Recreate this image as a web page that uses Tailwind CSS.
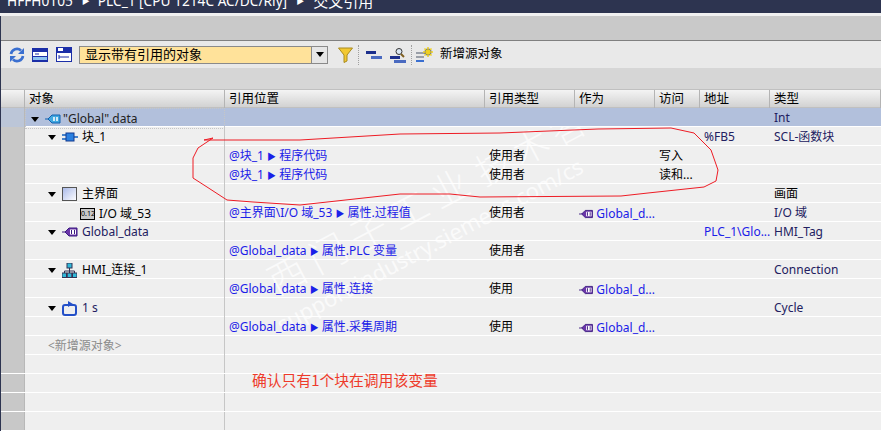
<!DOCTYPE html>
<html lang="zh">
<head>
    <meta charset="UTF-8" />
    <meta name="viewport" content="width=device-width, initial-scale=1" />
    <title>交叉引用</title>
    <script src="https://cdn.jsdelivr.net/npm/@tailwindcss/browser@4"></script>
</head>
<body class="relative w-[881px] h-[431px] overflow-hidden bg-[#efefef] text-[12px] text-black font-['Noto_Sans','Noto_Sans_CJK_SC',sans-serif]">
    <svg class="hidden">
        <symbol id="tag" viewBox="0 0 16 12">
            <path d="M0 6h4" stroke="#3a1a80" fill="none"/>
            <path d="M3 6l4-4h8v8H7z" fill="#6a35a8" stroke="#3a1a80"/>
            <rect x="8" y="3.500" width="6" height="5" fill="#fff"/>
            <path d="M9.500 4v4M12.500 4v4" stroke="#3a1a80"/>
        </symbol>
        <symbol id="down" viewBox="0 0 8 5"><path d="M0 0h8L4 5z" fill="#000"/></symbol>
    </svg>

    <!-- watermark, sits under the table rows -->
    <div class="absolute left-[278px] top-[310px] -rotate-[28deg] origin-left text-[22px] leading-[30px] text-white/70 whitespace-nowrap">support.industry.siemens.com/cs</div>
    <div class="absolute left-[270px] top-[258px] -rotate-[28deg] origin-left text-[38px] leading-[50px] font-light tracking-[8px] text-white/70 whitespace-nowrap">西门子工业</div>
    <div class="absolute left-[478px] top-[150px] -rotate-[28deg] origin-left text-[36px] leading-[50px] font-light tracking-[6px] text-white/70 whitespace-nowrap">技术答家</div>

    <!-- title bar -->
    <div class="relative h-[13px] bg-[#2d3450] overflow-hidden pl-[7px] text-white text-[13.700px] whitespace-nowrap">
        <div class="flex items-center h-[18px] -mt-[8px]">
            <span>HFFH0105</span><span class="text-[8px] ml-[9px]">▶</span><span class="ml-[8px]">PLC_1 [CPU 1214C AC/DC/Rly]</span><span class="text-[8px] ml-[9px]">▶</span><span class="ml-[9px] text-[15px]">交叉引用</span>
        </div>
    </div>
    <div class="relative h-[3px] bg-[#f0f0f0]"></div>
    <div class="relative h-[25px] bg-[#c9c9c9] border-b border-[#808080]"></div>

    <!-- toolbar -->
    <div class="relative h-[27px] bg-[#e9e9e9] flex items-center pl-[9px]">
        <svg class="w-[16px] h-[16px]" viewBox="0 0 16 16" fill="none" stroke="#3a6fd0" stroke-width="2.600">
            <path d="M2 7a6 6 0 0 1 10-3.500"/><path d="M14 9a6 6 0 0 1-10 3.500"/>
            <path d="M15 1v6H9z" fill="#3a6fd0" stroke="none"/><path d="M1 15V9h6z" fill="#3a6fd0" stroke="none"/>
        </svg>
        <svg class="w-[16px] h-[14px] ml-[7px]" viewBox="0 0 16 14"><rect width="16" height="14" fill="#1c2fa8"/><rect x="1" y="4" width="14" height="4" fill="#fff"/><path d="M3 6h4" stroke="#1c2fa8"/><rect x="1" y="9" width="14" height="3" fill="#8ec3f0"/></svg>
        <svg class="w-[16px] h-[15px] ml-[8px]" viewBox="0 0 16 15"><rect width="16" height="15" fill="#1c2fa8"/><rect x="1" y="6" width="14" height="8" fill="#fff"/><rect x="2" y="1" width="5" height="3" fill="#fff"/><path d="M3 8v4M3 10h10" stroke="#1c2fa8"/></svg>
        <div class="ml-[7px] w-[249px] h-[18px] flex border border-[#8a8a8a] bg-[#ffe29a]">
            <span class="flex-1 pl-[5px] leading-[15px] text-[13px]">显示带有引用的对象</span>
            <span class="w-[16px] bg-[#e6e6e6] border-l border-[#8a8a8a] flex items-center justify-center">
                <svg class="w-[8px] h-[5px]"><use href="#down"/></svg>
            </span>
        </div>
        <svg class="w-[15px] h-[16px] ml-[10px]" viewBox="0 0 15 16"><path d="M.5 1h14L9 8v6l-3 1.500V8z" fill="#f2c832" stroke="#a88a20"/></svg>
        <div class="ml-[5px] h-[20px] border-l border-dotted border-[#a0a0a0]"></div>
        <svg class="w-[16px] h-[10px] ml-[7px]" viewBox="0 0 16 10"><rect width="10" height="3" y="1" fill="#1c2f8c"/><rect x="5" y="6" width="11" height="3" fill="#4a6ac0"/></svg>
        <svg class="w-[16px] h-[16px] ml-[8px]" viewBox="0 0 16 16"><circle cx="9" cy="4.500" r="3" fill="#dce8f4" stroke="#333"/><path d="M11 7l3 3" stroke="#806020" stroke-width="2"/><rect y="9" width="10" height="3" fill="#1c2f8c"/><rect x="4" y="13" width="12" height="3" fill="#4a6ac0"/></svg>
        <div class="ml-[5px] h-[20px] border-l border-dotted border-[#a0a0a0]"></div>
        <svg class="w-[17px] h-[16px] ml-[4px]" viewBox="0 0 17 16"><path d="M0 6h9M0 10h8" stroke="#9a9fa8" stroke-width="2"/><path d="M0 14h8" stroke="#3a6fd0" stroke-width="2"/><circle cx="12" cy="5" r="3.500" fill="#2a4a90"/><path d="M12 0v10M7 5h10M8.500 1.500l7 7M15.500 1.500l-7 7" stroke="#f0d020" stroke-width="1.500"/></svg>
        <span class="ml-[7px] text-[12.500px]">新增源对象</span>
    </div>
    <div class="relative h-[21px] bg-[#d6d6d6]"></div>

    <!-- header -->
    <div class="relative h-[19px] grid grid-cols-[25px_200px_260px_90px_80px_45px_70px_111px] bg-linear-to-b from-[#f4f4f4] to-[#d2d2d2] border-y border-[#c0c0c0] text-[12.500px] leading-[18px] [&>*]:border-r [&>*]:border-[#b4b4b4] [&>*]:pl-[4px]">
        <div></div><div>对象</div><div>引用位置</div><div>引用类型</div><div>作为</div><div>访问</div><div>地址</div><div>类型</div>
    </div>

    <!-- rows -->
    <div class="relative leading-[18px] [&>div]:h-[19px] [&>div]:grid [&>div]:grid-cols-[25px_200px_260px_90px_80px_45px_70px_111px] [&>div]:border-b [&>div]:border-white [&>div>*:nth-child(1)]:bg-[#c8c8c8] [&>div>*:nth-child(1)]:border-r [&>div>*:nth-child(1)]:border-[#b8b8b8] [&>div>*:nth-child(2)]:border-r [&>div>*:nth-child(2)]:border-[#c6c6c6] [&>div>*:nth-child(n+3)]:pl-[4px] [&>div>*]:pt-[1px] [&>div>*]:whitespace-nowrap">
        <div class="bg-[#b2c0dc]">
            <i class="bg-[#bcc6d8]!"></i>
            <span class="flex items-center pl-[5px] border border-dotted border-[#2a50b0]">
                <svg class="w-[8px] h-[5px]"><use href="#down"/></svg>
                <svg class="w-[16px] h-[12px] ml-[6px]" viewBox="0 0 16 12"><path d="M0 6h4" stroke="#1060b0"/><path d="M3 6l4-4h8v8H7z" fill="#40a8e0" stroke="#1060b0"/><path d="M9 4v4M12 4v4" stroke="#fff" stroke-width="1.500"/></svg>
                <span class="ml-[2px] text-[#222]">"Global".data</span>
            </span>
            <i></i><i></i><i></i><i></i><i></i><span class="text-[#222060]">Int</span>
        </div>
        <div>
            <i></i>
            <span class="flex items-center pl-[23px]">
                <svg class="w-[8px] h-[5px]"><use href="#down"/></svg>
                <svg class="w-[16px] h-[12px] ml-[6px]" viewBox="0 0 16 12"><path d="M0 4h4M0 8h4M12 6h4" stroke="#1060c0" stroke-width="1.500"/><rect x="4" y="2" width="8" height="8" fill="#2a80e0" stroke="#123a90"/></svg>
                <span class="ml-[4px]">块_1</span>
            </span>
            <i></i><i></i><i></i><i></i><span class="text-[#222060]">%FB5</span><span class="text-[#222060]">SCL-函数块</span>
        </div>
        <div>
            <i></i><i></i>
            <span class="text-[#1a20e8]">@块_1 <span class="text-[9px]">▶</span> 程序代码</span>
            <span>使用者</span><i></i><span>写入</span><i></i><i></i>
        </div>
        <div>
            <i></i><i></i>
            <span class="text-[#1a20e8]">@块_1 <span class="text-[9px]">▶</span> 程序代码</span>
            <span>使用者</span><i></i><span>读和...</span><i></i><i></i>
        </div>
        <div>
            <i></i>
            <span class="flex items-center pl-[23px]">
                <svg class="w-[8px] h-[5px]"><use href="#down"/></svg>
                <svg class="w-[15px] h-[14px] ml-[6px]" viewBox="0 0 15 14"><defs><linearGradient id="scr" x1="0" y1="0" x2="1" y2="1"><stop offset="0" stop-color="#a8b8e8"/><stop offset="1" stop-color="#fff"/></linearGradient></defs><rect x=".5" y=".5" width="14" height="13" fill="url(#scr)" stroke="#555"/></svg>
                <span class="ml-[5px]">主界面</span>
            </span>
            <i></i><i></i><i></i><i></i><i></i><span>画面</span>
        </div>
        <div>
            <i></i>
            <span class="flex items-center pl-[55px]">
                <span class="w-[15px] h-[12px] border border-black bg-[#c8c8c8] text-[7px] leading-[10px] text-center">0.12</span>
                <span class="ml-[4px]">I/O 域_53</span>
            </span>
            <span class="text-[#1a20e8]">@主界面\I/O 域_53 <span class="text-[9px]">▶</span> 属性.过程值</span>
            <span>使用者</span>
            <span class="flex items-center text-[#1a20e8]"><svg class="w-[16px] h-[12px] mr-[3px]"><use href="#tag"/></svg>Global_d...</span>
            <i></i><i></i><span class="text-[#222060]">I/O 域</span>
        </div>
        <div>
            <i></i>
            <span class="flex items-center pl-[23px]">
                <svg class="w-[8px] h-[5px]"><use href="#down"/></svg>
                <svg class="w-[16px] h-[12px] ml-[6px]"><use href="#tag"/></svg>
                <span class="ml-[4px] text-[#222060]">Global_data</span>
            </span>
            <i></i><i></i><i></i><i></i>
            <span class="text-[#1a20e8] overflow-hidden">PLC_1\Glo...</span><span class="text-[#222060]">HMI_Tag</span>
        </div>
        <div>
            <i></i><i></i>
            <span class="text-[#1a20e8]">@Global_data <span class="text-[9px]">▶</span> 属性.PLC 变量</span>
            <span>使用者</span><i></i><i></i><i></i><i></i>
        </div>
        <div>
            <i></i>
            <span class="flex items-center pl-[23px]">
                <svg class="w-[8px] h-[5px]"><use href="#down"/></svg>
                <svg class="w-[15px] h-[15px] ml-[6px]" viewBox="0 0 15 15"><rect x="5" y="0" width="5" height="5" fill="#30b8d8" stroke="#335"/><path d="M7.500 5v3M2.500 10V8h10v2M7.500 8v2" stroke="#335" fill="none"/><rect x="0" y="10" width="4.500" height="4.500" fill="#30b8d8" stroke="#335"/><rect x="5.250" y="10" width="4.500" height="4.500" fill="#30b8d8" stroke="#335"/><rect x="10.500" y="10" width="4.500" height="4.500" fill="#30b8d8" stroke="#335"/></svg>
                <span class="ml-[5px]">HMI_连接_1</span>
            </span>
            <i></i><i></i><i></i><i></i><i></i><span class="text-[#222060]">Connection</span>
        </div>
        <div>
            <i></i><i></i>
            <span class="text-[#1a20e8]">@Global_data <span class="text-[9px]">▶</span> 属性.连接</span>
            <span>使用</span>
            <span class="flex items-center text-[#1a20e8]"><svg class="w-[16px] h-[12px] mr-[3px]"><use href="#tag"/></svg>Global_d...</span>
            <i></i><i></i><i></i>
        </div>
        <div>
            <i></i>
            <span class="flex items-center pl-[23px]">
                <svg class="w-[8px] h-[5px]"><use href="#down"/></svg>
                <svg class="w-[15px] h-[15px] ml-[6px]" viewBox="0 0 15 15" fill="none"><rect x="1" y="4" width="13" height="10" rx="2" stroke="#2450c8" stroke-width="2"/><path d="M6 0l5 3-5 3z" fill="#2450c8"/></svg>
                <span class="ml-[5px] text-[#222060]">1 s</span>
            </span>
            <i></i><i></i><i></i><i></i><i></i><span class="text-[#222060]">Cycle</span>
        </div>
        <div>
            <i></i><i></i>
            <span class="text-[#1a20e8]">@Global_data <span class="text-[9px]">▶</span> 属性.采集周期</span>
            <span>使用</span>
            <span class="flex items-center text-[#1a20e8]"><svg class="w-[16px] h-[12px] mr-[3px]"><use href="#tag"/></svg>Global_d...</span>
            <i></i><i></i><i></i>
        </div>
        <div>
            <i></i><span class="pl-[23px] text-[#8c8c8c]">&lt;新增源对象&gt;</span><i></i><i></i><i></i><i></i><i></i><i></i>
        </div>
        <div><i></i><i></i><i></i><i></i><i></i><i></i><i></i><i></i></div>
        <div><i></i><i></i><i></i><i></i><i></i><i></i><i></i><i></i></div>
        <div><i></i><i></i><i></i><i></i><i></i><i></i><i></i><i></i></div>
        <div><i></i><i></i><i></i><i></i><i></i><i></i><i></i><i></i></div>
    </div>

    <!-- left edge -->
    <div class="absolute left-0 top-[16px] bottom-0 w-px bg-[#2d3450]"></div>

    <!-- annotation -->
    <svg class="absolute inset-0 w-[881px] h-[431px] pointer-events-none" fill="none" stroke="#ee1c25" stroke-width="1">
        <path d="M213 138L204 140H300L400 134L500 133L598 129L671 128L694 133L711 150L718 170L716 181L704 187L648 193L621 196L480 197L450 194L400 194L300 205L253 202L227 200L207 187L193 178V158L198 148L213 138"/>
    </svg>
    <span class="absolute left-[252px] top-[369px] text-[14.800px] text-[#ee3a2a] font-['Noto_Sans_CJK_SC',sans-serif]">确认只有1个块在调用该变量</span>
</body>
</html>
